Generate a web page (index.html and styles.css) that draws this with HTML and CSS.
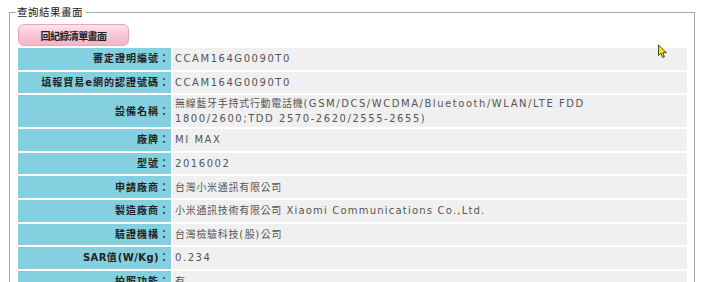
FILE: index.html
```html
<!DOCTYPE html>
<html lang="zh-Hant">
<head>
<meta charset="utf-8">
<title>查詢結果畫面</title>
<link rel="stylesheet" href="styles.css">
</head>
<body>
<div class="page">
  <div class="dots" aria-hidden="true"></div>
  <fieldset class="result">
    <legend class="result-title">查詢結果畫面</legend>
    <button class="back-btn" type="button">回紀錄清單畫面</button>
    <table class="detail">
      <tr><th>審定證明編號：</th><td>CCAM164G0090T0</td></tr>
      <tr><th>填報貿易e網的認證號碼：</th><td>CCAM164G0090T0</td></tr>
      <tr><th>設備名稱：</th><td><span class="han">無線藍牙手持式行動電話機</span>(GSM/DCS/WCDMA/Bluetooth/WLAN/LTE FDD<br>1800/2600;TDD 2570-2620/2555-2655)</td></tr>
      <tr><th>廠牌：</th><td>MI MAX</td></tr>
      <tr><th>型號：</th><td>2016002</td></tr>
      <tr><th>申請廠商：</th><td><span class="han">台灣小米通訊有限公司</span></td></tr>
      <tr><th>製造廠商：</th><td><span class="han">小米通訊技術有限公司</span><span class="latin"> Xiaomi Communications Co.,Ltd.</span></td></tr>
      <tr><th>驗證機構：</th><td><span class="han">台灣檢驗科技</span>(<span class="han">股</span>)<span class="han">公司</span></td></tr>
      <tr><th><span class="tight">SAR</span>值<span class="tight">(W/Kg)</span>：</th><td>0.234</td></tr>
      <tr><th>拍照功能：</th><td><span class="han">有</span></td></tr>
    </table>
  </fieldset>
  <svg class="cursor" width="11" height="15" viewBox="0 0 11 15" aria-hidden="true">
    <path d="M1.5 1 L1.5 11.5 L4 9.2 L5.6 13.5 L7.4 12.8 L5.9 8.6 L9.3 8.6 Z" fill="#f2ea1a" stroke="#3a3a10" stroke-width="0.9" stroke-linejoin="round"/>
  </svg>
</div>
</body>
</html>
```
FILE: styles.css
```css
html, body {
  margin: 0;
  padding: 0;
  background: #ffffff;
  overflow: hidden;
}

body {
  font-family: "DejaVu Sans", "Noto Sans CJK TC", sans-serif;
  font-size: 10px;
  color: #333333;
}

.page {
  position: relative;
  width: 720px;
  height: 282px;
}

.result {
  box-sizing: border-box;
  width: 686px;
  margin: 5px 0 0 9px;
  padding: 5px 5px 0 6px;
  border: 1px solid #a9a9a9;
  border-bottom: none;
}

.result-title {
  padding: 0 3px 0 1px;
  font-family: "Noto Sans CJK TC", sans-serif;
  font-size: 10.5px;
  line-height: 14px;
  letter-spacing: 0.5px;
  color: #1a1a1a;
}

.back-btn {
  display: block;
  box-sizing: border-box;
  width: 111px;
  height: 22px;
  margin: 0 0 0 2px;
  padding: 0;
  border: 1px solid #eaa6bb;
  border-radius: 6px;
  background: linear-gradient(#fde3ec, #f8c3d3 55%, #f5b4c8);
  font-family: "Noto Sans CJK TC", sans-serif;
  font-size: 10px;
  font-weight: bold;
  letter-spacing: -0.6px;
  color: #222222;
}

.detail {
  width: 673px;
  border-collapse: separate;
  border-spacing: 2px;
}

.detail th,
.detail td {
  box-sizing: border-box;
  height: 21.6px;
  padding: 1px 2px;
  line-height: 15px;
  vertical-align: middle;
}

.detail th {
  width: 153px;
  padding-right: 1px;
  background: #85d0e0;
  text-align: right;
  font-weight: bold;
  letter-spacing: 1px;
  color: #222222;
  white-space: nowrap;
}

.detail td {
  background: #f0f0f0;
  text-align: left;
  letter-spacing: 1.55px;
  color: #555555;
}

.tight {
  letter-spacing: 0.4px;
}

.han {
  letter-spacing: 0.7px;
}

.latin {
  letter-spacing: 1.2px;
}

.dots {
  position: absolute;
  left: 505px;
  top: 0;
  width: 7px;
  height: 15px;
  background-image: radial-gradient(circle, #cfcfcf 45%, transparent 50%);
  background-size: 2px 2px;
}

.cursor {
  position: absolute;
  left: 657px;
  top: 39px;
}
```
